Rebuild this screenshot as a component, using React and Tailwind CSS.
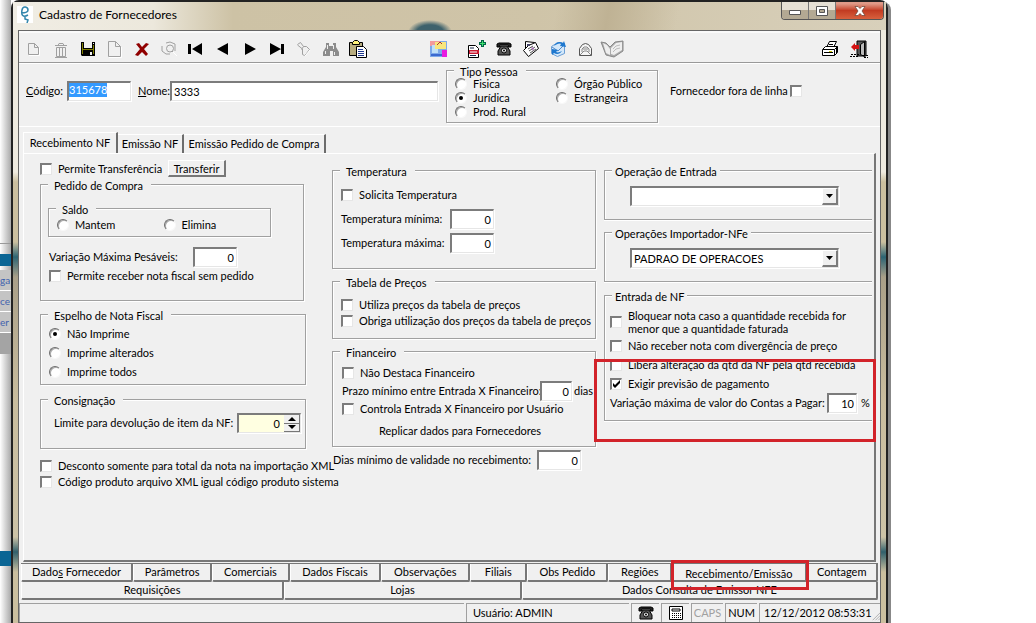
import React from "react";

const sunken =
  "border-t-2 border-l-2 border-r border-b border-t-[#7c7c7c] border-l-[#7c7c7c] border-r-[#e6e6e6] border-b-[#e6e6e6] shadow-[1px_1px_0_#fff] outline-none";

function Group({ title, className = "", inner = "", open = false, children }) {
  return (
    <fieldset
      className={`relative min-w-0 border border-[#a0a0a0] ${
        open ? "border-r-0 shadow-[0_1px_0_#fff,inset_1px_1px_0_#fff]" : "shadow-[1px_1px_0_#fff,inset_1px_1px_0_#fff]"
      } ${className}`}
    >
      <legend className={`h-[13px] bg-[#f0f0f0] leading-[16px] whitespace-nowrap ${open ? "ml-[7px] px-[3px]" : "ml-[7px] pr-2 pl-1.5"}`}>
        {title}
      </legend>
      <div className={inner}>{children}</div>
    </fieldset>
  );
}

function Check({ label, checked = false, className = "h-4", before = false, gap = "gap-1.5" }) {
  return (
    <label className={`flex items-center whitespace-nowrap ${gap} ${before ? "flex-row-reverse justify-end" : ""} ${className}`}>
      <span className="grid size-3 shrink-0">
        <input
          type="checkbox"
          defaultChecked={checked}
          className="peer col-start-1 row-start-1 size-3 appearance-none border-t-2 border-l-2 border-r border-b border-t-[#7c7c7c] border-l-[#7c7c7c] border-r-[#e6e6e6] border-b-[#e6e6e6] bg-white"
        />
        <svg viewBox="0 0 12 12" className="pointer-events-none invisible col-start-1 row-start-1 size-3 peer-checked:visible">
          <path d="M3 5v3l2 2 5-5V2L5 7z" fill="#000" />
        </svg>
      </span>
      <span>{label}</span>
    </label>
  );
}

function Radio({ label, name, checked = false, className = "h-4", gap = "gap-1.5" }) {
  return (
    <label className={`flex items-center whitespace-nowrap ${gap} ${className}`}>
      <span className="grid size-3 shrink-0 place-items-center">
        <input
          type="radio"
          name={name}
          defaultChecked={checked}
          className="peer col-start-1 row-start-1 size-3 appearance-none rounded-full border border-t-[#6c6c6c] border-l-[#6c6c6c] border-r-[#f8f8f8] border-b-[#f8f8f8] bg-white shadow-[inset_1px_1px_0_#aaa]"
        />
        <span className="pointer-events-none invisible col-start-1 row-start-1 size-1 rounded-full bg-black peer-checked:visible" />
      </span>
      <span>{label}</span>
    </label>
  );
}

function NumberField({ id, value, className = "w-11" }) {
  return <input id={id} defaultValue={value} className={`h-5 bg-white pr-0.5 text-right ${sunken} ${className}`} />;
}

function Combo({ label, value }) {
  return (
    <div className={`mr-[33px] ml-[25px] grid h-5 bg-white ${sunken}`}>
      <select aria-label={label} defaultValue={value} className="col-start-1 row-start-1 h-full w-full appearance-none bg-transparent pl-0.5 outline-none">
        <option value={value}>{value}</option>
      </select>
      <span className="pointer-events-none col-start-1 row-start-1 flex h-full w-4 items-center justify-center justify-self-end border-t border-l border-r-2 border-b-2 border-t-white border-l-white border-r-[#7c7c7c] border-b-[#7c7c7c] bg-[#f0f0f0]">
        <svg viewBox="0 0 7 4" className="h-1 w-[7px]"><path d="M0 0h7L3.500 4z" /></svg>
      </span>
    </div>
  );
}

function Phone() {
  return (
    <svg viewBox="0 0 16 14" className="h-3.5 w-4">
      <path d="M1 4V2l2-1h10l2 1v3h-3V3H4v2H1z" fill="#222" stroke="#000" />
      <path d="M5 4h6l3 5v4H2V9z" fill="#555" stroke="#000" />
      <circle cx="8" cy="8.500" r="2.500" fill="#eee" stroke="#000" />
      <circle cx="8" cy="8.500" r="1" />
    </svg>
  );
}

const S = ({ children }) => (
  <svg viewBox="0 0 18 18" className="size-[18px] shrink-0" fill="none">
    {children}
  </svg>
);

const leftTools = [
  ["Novo", <S><path d="M3.500 3.500h6l4 4v7h-10zM9.500 3.500v4h4" stroke="#a0a0a0" /><path d="M4 15.500h10.500v-8" stroke="#fff" /></S>],
  ["Excluir", <S><path d="M3 5.500h12M6 5.500l1-2h4l1 2M4.500 7.500h9v9h-9zM7.500 8v8M10.500 8v8M3 17.500h12" stroke="#a0a0a0" /></S>],
  ["Salvar", <S><path d="M2 2h14v14H3l-1-1z" fill="#000" /><path d="M3 3h1v11H3zM14 5h1v9h-1zM4 9h10v1H4z" fill="#808000" /><path d="M5 2h8v6H5z" fill="#f0f0f0" /><path d="M11 12h2v3h-2zM14 3h1v1h-1z" fill="#f0f0f0" /></S>],
  ["Documento", <S><path d="M2.500 1.500h7l5 5v10h-12zM9.500 1.500v5h5" stroke="#a0a0a0" /><path d="M3 17.500h12.500V7" stroke="#fff" /></S>],
  ["Cancelar", <S><path d="M3 4l3-1 3 4 4-4 3 1-5 5 4 5-2 2-4-4-4 4-3-1 5-6z" fill="#900000" /></S>],
  ["Localizar", <S><circle cx="10" cy="8.500" r="3.500" stroke="#a0a0a0" /><path d="M12 11l4 4M2 6v5l4 3h4M6 3l4-1 5 2v7" stroke="#a0a0a0" /><path d="M13 12l4 4" stroke="#fff" /></S>],
  ["Primeiro", <S><path d="M1 4h3v10H1zM15 3v12L5 9z" fill="#000" /></S>],
  ["Anterior", <S><path d="M14 3v12L3 9z" fill="#000" /></S>],
  ["Próximo", <S><path d="M4 3v12l11-6z" fill="#000" /></S>],
  ["Último", <S><path d="M2 3v12l11-6zM13 4h3v10h-3z" fill="#000" /></S>],
  ["Filtrar", <S><path d="M2.500 4.500l3-2 3 4h3l3 3-3 4-2 2-2-1V9l-5-4M8.500 6.500l-2 3" stroke="#a0a0a0" /><path d="M10 16l5-6" stroke="#fff" /></S>],
  ["Pesquisar", <S><path d="M4 3h3v3h4V3h3v4l3 5v4h-6v-5H8v5H1v-4l3-5z" fill="#8c8c8c" /><path d="M3.500 11v3M12.500 12v3M5.500 5v4M11.500 5v4" stroke="#eee" /></S>],
  ["Colar", <S><path d="M.5 2.500h13v13H.5z" fill="#b8ad80" stroke="#000" /><path d="M3.500 4.500v-2l2-2h3l2 2v2z" fill="#fff27a" stroke="#000" /><path d="M7.500 6.500h7l3 3v8h-10z" fill="#fff" stroke="#000" /><path d="M9 9.500h5M9 11.500h6M9 13.500h6M9 15.500h6" stroke="#203a90" /></S>],
];

const midTools = [
  ["Etiqueta adicionar", <S><path d="M.5 5.500h7l3 3v9H.5z" fill="#fff" stroke="#000" /><path d="M2 8h4M2 15.500h6" stroke="#18284c" /><path d="M1 10h10v4H1z" fill="#c81830" /><path d="M2 12h7" stroke="#fff" /><path d="M14.500 0v7M11 3.500h7" stroke="#064" strokeWidth="3" /><path d="M14.500 1v5M12 3.500h5" stroke="#3fe070" /></S>],
  ["Telefones", <Phone />],
  ["Cartões", <S><path d="M3.500 1.500l9 1v8l-9-1z" fill="#fff" stroke="#000" /><path d="M6.500 5.500l7-3 3 6-10 8-5-6z" fill="#fff" stroke="#000" /><path d="M5 4h3v2H5z" fill="#446" /><path d="M6 9l5-3M7 11l6-4M8 13l6-4" stroke="#555" /><path d="M9 7l3 1-1 3z" fill="#a06ab0" /></S>],
  ["Sincronizar", <S><path d="M2.500 6.500l6-4 7 1v10l-7 3-6-3z" fill="#d4e8fa" stroke="#6b9ed4" /><path d="M3 7l6 4 6-6" stroke="#5089c8" /><path d="M5 6c2-4 6-5 9-3l1-2 2 6-6-1 1-2c-2-1-4 0-7 2zM13 11c-2 3-5 4-8 2l-2 2v-6l6 1-2 2c2 1 4 0 6-1z" fill="#1e78cf" /></S>],
  ["Correio", <S><path d="M3.500 8.500l3-4 3-1 3 1 3 4v7h-12z" fill="#f5f5f5" stroke="#555" /><path d="M4 15l4-4h3l4 4M6 12V9l2-2h3l2 2v3M7 9h5" stroke="#888" /></S>],
];

function ToolButton({ label, children }) {
  return (
    <button type="button" aria-label={label} className="flex h-6 w-[27px] items-center justify-center">
      {children}
    </button>
  );
}

const subTabs = "whitespace-nowrap border-t border-r-2 border-t-white border-r-[#6c6c6c]";

const bottomTabs = [
  [<>Dado<u>s</u> Fornecedor</>, "grow-[113]"],
  ["Parâmetros", "grow-[79]"],
  ["Comerciais", "grow-[77]"],
  ["Dados Fiscais", "grow-[92]"],
  ["Observações", "grow-[89]"],
  ["Filiais", "grow-[56]"],
  ["Obs Pedido", "grow-[81]"],
  ["Regiões", "grow-[63]"],
  ["Recebimento/Emissão", "grow-[136]"],
  ["Contagem", "grow-[71]"],
];

const raisedTab = "h-[18px] min-w-0 basis-0 rounded-b-[2px] border-r-2 border-b-2 border-l border-r-[#777] border-b-[#777] border-l-white text-center leading-4 whitespace-nowrap";

function BackStrip() {
  return (
    <aside className="flex w-[11px] shrink-0 flex-col bg-linear-to-r from-white to-[#aaa] text-[10px] leading-5 text-[#3f62ad]">
      <div className="h-[244px] border-b border-[#999]" />
      <div className="h-2.5" />
      <div className="h-3 bg-[#0a6594]" />
      <div className="mt-1 h-[21px] border-b border-white bg-[#c4c4c4]">ga</div>
      <div className="h-[21px] border-b border-white bg-[#c4c4c4]">ce</div>
      <div className="h-[21px] border-b border-white bg-[#c4c4c4]">er</div>
      <div className="h-[21px] bg-[#a4a4a4]" />
      <div className="h-[197px]" />
      <div className="h-[15px] bg-[#0a6594]" />
    </aside>
  );
}

function TitleBar() {
  return (
    <header className="flex h-7 items-start justify-between pr-0.5 pl-1 bg-[radial-gradient(ellipse_22px_12px_at_417px_30px,#3e626c_60%,transparent),linear-gradient(100deg,transparent_0_62%,#bfb294_68%,transparent_76%),linear-gradient(90deg,#f0ede4_0,#ece8dc_140px,#cdc2a5_220px,#cfc4a8_60%,#d8d0bb)]">
      <div className="flex items-center gap-1.5 pt-1">
        <svg viewBox="0 0 16 17" className="h-[17px] w-4 bg-white" fill="none">
          <path d="M4 7c3 0 7 0 7-3S6-1 5 4s1 8 6 5M8 11v2l3 1-1 3" stroke="#3286ac" strokeWidth="1.500" />
        </svg>
        <h1 className="text-[12px] leading-4 whitespace-nowrap">Cadastro de Fornecedores</h1>
      </div>
      <div className="flex h-[18px] overflow-hidden rounded-b-[4px] border border-t-0 border-[#555]">
        <button type="button" aria-label="Minimizar" className="flex w-[27px] items-center justify-center border-r border-[#777] bg-linear-to-b from-[#e6e0d4] from-50% to-[#b3a993] to-50%">
          <svg viewBox="0 0 12 5" className="mt-1 h-[5px] w-3"><path d="M.5.5h11v4H.5z" fill="#fff" stroke="#555" /></svg>
        </button>
        <button type="button" aria-label="Maximizar" className="flex w-[27px] items-center justify-center border-r border-[#777] bg-linear-to-b from-[#e6e0d4] from-50% to-[#b3a993] to-50%">
          <svg viewBox="0 0 12 10" className="h-2.5 w-3"><path d="M.5.5h11v9H.5z" fill="#fff" stroke="#555" /><path d="M3.500 3.500h5v3h-5z" fill="#b3a993" stroke="#555" /></svg>
        </button>
        <button type="button" aria-label="Fechar" className="flex w-[47px] items-center justify-center bg-linear-to-b from-[#df9a88] from-10% via-[#c23b22] via-50% to-[#d8603d]">
          <svg viewBox="0 0 12 10" className="h-2.5 w-3"><path d="M1 .5h3l2 2 2-2h3L8 5l3 4.500H8l-2-2-2 2H1L4 5z" fill="#fff" stroke="#643" strokeWidth=".7" /></svg>
        </button>
      </div>
    </header>
  );
}

function Toolbar() {
  return (
    <div className="flex h-8 items-center border-b border-[#999] border-t-2 border-t-[#fafafa] pt-0.5 pl-px">
      {leftTools.map(([label, icon]) => <ToolButton key={label} label={label}>{icon}</ToolButton>)}
      <div className="ml-[54px]">
        <ToolButton label="Imagem">
          <svg viewBox="0 0 17 16" className="h-4 w-[17px]">
            <path d="M0 0h17v16H0z" fill="#7da8e8" />
            <path d="M0 0h10v5H0z" fill="#f39a9c" />
            <path d="M2 4h6v8H2z" fill="#bfe0f8" />
            <path d="M5 1h11v7H5z" fill="#f8e67c" />
            <path d="M12 9h5v7h-5z" fill="#e81ce0" />
            <path d="M1 13h11v2H1z" fill="#3c6ad0" />
            <path d="M7 4l3-3 2 2" fill="none" stroke="#a33" />
          </svg>
        </ToolButton>
      </div>
      <div className="ml-[11px] flex">
        {midTools.map(([label, icon]) => <ToolButton key={label} label={label}>{icon}</ToolButton>)}
        <ToolButton label="Livro">
          <svg viewBox="0 0 24 18" className="h-[18px] w-6 shrink-0">
            <path d="M1 2l5 1 4 4 5-5 8-1v10l-9 6-8-2z" fill="#aaa" stroke="#888" />
            <path d="M3 3l4 2 3 4v6l-4-2zM11 8l5-5 6-1v8l-8 5-3-1z" fill="#eee" />
            <path d="M13 9l3-3 4-1M13 12l3-3 4-1" fill="none" stroke="#bbb" />
          </svg>
        </ToolButton>
      </div>
      <div className="mr-2 ml-auto flex gap-0.5">
        <ToolButton label="Imprimir">
          <S><path d="M5.500 7.500l3-6h7l-3 6z" fill="#fff" stroke="#000" /><path d="M1.500 9.500l3-3h12v6l-3 3h-12z" fill="#fff" stroke="#000" /><path d="M2 9.500h11.500v6M13.500 9.500l3-3M15.500 8v6M3 12.500h9M8 4.500h4" stroke="#000" /><path d="M8 11h3v1H8z" fill="#cc0" /></S>
        </ToolButton>
        <ToolButton label="Sair">
          <S><path d="M7 1h9v15H7z" fill="#555" stroke="#000" /><path d="M10.500 4.500l4-3v15l-4-2z" fill="#bbb" stroke="#000" /><path d="M0 16.500h9M1 14.500h9M13 15.500h5M14 17.500h4" stroke="#000" strokeDasharray="2 1" /><path d="M1 7l4-4v2h4v4H5v2z" fill="#d31414" /></S>
        </ToolButton>
      </div>
    </div>
  );
}

function SupplierHeader() {
  return (
    <div className="flex h-16 items-center border-t border-t-white border-b border-b-white pr-20 pb-2 pl-[7px]">
      <label htmlFor="codigo" className="w-[41px]"><u>C</u>ódigo:</label>
      <div className={`h-5 w-16 bg-white ${sunken}`}>
        <input id="codigo" defaultValue="315678" className="block h-3.5 w-[38px] bg-[#3399ff] text-white outline-none" />
      </div>
      <label htmlFor="nome" className="ml-[7px] w-8"><u>N</u>ome:</label>
      <input id="nome" defaultValue="3333" className={`h-5 min-w-0 flex-1 bg-white px-0.5 ${sunken}`} />
      <Group title="Tipo Pessoa" className="ml-2 w-[212px] self-start">
        <div className="mb-[3px] ml-2 grid grid-cols-[101px_1fr]">
          <div>
            <Radio name="tipo" label="Fisica" className="h-3.5" />
            <Radio name="tipo" label="Jurídica" checked className="h-3.5" />
            <Radio name="tipo" label="Prod. Rural" className="h-3.5" />
          </div>
          <div>
            <Radio name="tipo" label="Órgão Público" className="h-3.5" />
            <Radio name="tipo" label="Estrangeira" className="h-3.5" />
          </div>
        </div>
      </Group>
      <Check label="Fornecedor fora de linha" before className="ml-3 h-4 w-[130px]" gap="gap-0.5" />
    </div>
  );
}

function LeftColumn() {
  return (
    <div className="min-w-0 pt-1.5">
      <div className="flex h-[17px] items-center gap-1.5">
        <Check label="Permite Transferência" />
        <button type="button" className="h-[17px] w-[58px] border-t border-l border-r-2 border-b-2 border-t-white border-l-white border-r-[#777] border-b-[#777] leading-[15px]">Transferir</button>
      </div>
      <Group title="Pedido de Compra" className="mt-px mr-7" inner="pt-[11px] pb-[15px]">
        <Group title="Saldo" className="mr-8 ml-[7px]" inner="mb-px ml-2 grid grid-cols-2">
          <Radio name="saldo" label="Mantem" className="h-5" />
          <Radio name="saldo" label="Elimina" className="h-5" />
        </Group>
        <div className="mt-2.5 ml-2 flex h-5 items-center">
          <label htmlFor="pesaveis" className="w-36">Variação Máxima Pesáveis:</label>
          <NumberField id="pesaveis" value="0" />
        </div>
        <Check label="Permite receber nota fiscal sem pedido" className="ml-2 h-[18px]" />
      </Group>
      <Group title="Espelho de Nota Fiscal" className="mt-[7px] mr-[26px]" inner="py-[3px] pl-2">
        <Radio name="espelho" label="Não Imprime" checked className="h-[19px]" />
        <Radio name="espelho" label="Imprime alterados" className="h-[19px]" />
        <Radio name="espelho" label="Imprime todos" className="h-[19px]" />
      </Group>
      <Group title="Consignação" className="mt-2 mr-[26px]" inner="pt-[7px] pb-[15px] pl-[13px]">
        <div className="flex h-5 items-center">
          <label htmlFor="limite" className="w-[183px] whitespace-nowrap">Limite para devolução de item da NF:</label>
          <div className={`flex h-5 w-16 bg-[#ffffe1] ${sunken}`}>
            <input id="limite" defaultValue="0" className="min-w-0 flex-1 pr-1 text-right outline-none" />
            <div className="flex w-4 flex-col">
              <button type="button" aria-label="Aumentar" className="flex flex-1 items-center justify-center border-r border-b border-[#777] bg-[#f0f0f0]"><svg viewBox="0 0 8 4" className="h-1 w-2"><path d="M0 4h8L4 0z" /></svg></button>
              <button type="button" aria-label="Diminuir" className="flex flex-1 items-center justify-center border-r border-b border-[#777] bg-[#f0f0f0]"><svg viewBox="0 0 8 4" className="h-1 w-2"><path d="M0 0h8L4 4z" /></svg></button>
            </div>
          </div>
        </div>
      </Group>
      <div className="mt-[9px]">
        <Check label="Desconto somente para total da nota na importação XML" />
        <Check label="Código produto arquivo XML igual código produto sistema" />
      </div>
    </div>
  );
}

function MiddleColumn() {
  return (
    <div className="mr-2 min-w-0 pt-2.5">
      <Group title="Temperatura" inner="pt-[9px] pb-[15px] pl-2">
        <Check label="Solicita Temperatura" className="h-[18px]" />
        <div className="mt-[5px] flex h-5 items-center">
          <label htmlFor="tmin" className="w-[109px]">Temperatura mínima:</label>
          <NumberField id="tmin" value="0" />
        </div>
        <div className="mt-1 flex h-5 items-center">
          <label htmlFor="tmax" className="w-[109px]">Temperatura máxima:</label>
          <NumberField id="tmax" value="0" />
        </div>
      </Group>
      <Group title="Tabela de Preços" className="mt-1.5" inner="py-[9px] pl-2">
        <Check label="Utiliza preços da tabela de preços" />
        <Check label="Obriga utilização dos preços da tabela de preços" />
      </Group>
      <Group title="Financeiro" className="mt-1.5" inner="py-[7px] pl-[9px]">
        <Check label="Não Destaca Financeiro" />
        <div className="flex h-5 items-center whitespace-nowrap">
          <label htmlFor="prazo" className="w-[198px]">Prazo mínimo entre Entrada X Financeiro:</label>
          <NumberField id="prazo" value="0" className="w-8" />
          <span className="pl-0.5">dias</span>
        </div>
        <Check label="Controla Entrada X Financeiro por Usuário" />
        <button type="button" className="mt-1.5 ml-[37px] block h-4 leading-4">Replicar dados para Fornecedores</button>
      </Group>
      <div className="mt-[3px] flex h-5 items-center whitespace-nowrap">
        <label htmlFor="validade" className="w-[205px] pl-px">Dias mínimo de validade no recebimento:</label>
        <NumberField id="validade" value="0" />
      </div>
    </div>
  );
}

function RightColumn() {
  return (
    <div className="min-w-0 pt-2.5">
      <Group open title="Operação de Entrada" inner="pt-[9px] pb-[13px]">
        <Combo label="Operação de Entrada" value="" />
      </Group>
      <Group open title="Operações Importador-NFe" className="mt-1.5" inner="pt-[9px] pb-[13px]">
        <Combo label="Operações Importador-NFe" value="PADRAO DE OPERACOES" />
      </Group>
      <Group open title="Entrada de NF" className="mt-[7px]" inner="py-[7px] pl-[5px]">
        <Check
          label={<>Bloquear nota caso a quantidade recebida for<br />menor que a quantidade faturada</>}
          className="h-[26px] leading-[13px]"
        />
        <Check label="Não receber nota com divergência de preço" className="mt-0.5 h-[18px]" />
        <Check label="Libera alteração da qtd da NF pela qtd recebida" className="h-[19px]" />
        <Check label="Exigir previsão de pagamento" checked className="h-[19px]" />
        <div className="flex h-5 items-center whitespace-nowrap">
          <label htmlFor="variacao" className="w-[217px]">Variação máxima de valor do Contas a Pagar:</label>
          <NumberField id="variacao" value="10" className="w-[30px]" />
          <span className="pl-1">%</span>
        </div>
        <div className="pointer-events-none absolute top-[57px] -right-1 -left-[11px] h-[83px] border-3 border-[#d2232a]" />
      </Group>
    </div>
  );
}

export default function App() {
  return (
    <div className="flex min-h-[623px] bg-white pr-[148px] font-['Lato','Liberation_Sans',sans-serif] text-[11px] leading-[14px] text-black">
      <BackStrip />
      <div className="flex min-w-0 flex-1 flex-col rounded-t-lg border-t-2 border-r-2 border-l-2 border-[#222] bg-[linear-gradient(180deg,#efebe0_0_170px,#cbbf9f_180px_240px,#2c6473_255px,#a99f88_275px,#c9bd9e_400px,#cdc3a7_535px,#31606c_550px,#cbbf9f_570px)] shadow-[3px_2px_0_#888]">
        <TitleBar />
        <main className="mx-[5px] flex flex-1 flex-col border border-[#666] bg-[#f0f0f0]">
          <Toolbar />
          <SupplierHeader />
          <nav className="flex items-end pt-[5px] pl-1">
            <button type="button" className={`h-[21px] w-[95px] ${subTabs} border-l border-l-white`}>Recebimento NF</button>
            <button type="button" className={`h-[19px] w-[66px] ${subTabs}`}>Emissão NF</button>
            <button type="button" className={`h-[19px] w-[142px] ${subTabs}`}>Emissão Pedido de Compra</button>
          </nav>
          <section className="mx-1 grid flex-1 grid-cols-[minmax(0,292fr)_minmax(0,272fr)_minmax(0,268fr)] border-t border-r-2 border-b-2 border-l border-t-white border-r-[#777] border-b-[#777] border-l-white pr-0.5 pb-[70px] pl-4">
            <LeftColumn />
            <MiddleColumn />
            <RightColumn />
          </section>
          <nav className="mx-0.5 mt-px border-t border-[#777]">
            <div className="flex">
              {bottomTabs.map(([label, grow], i) => (
                <button key={i} type="button" className={`${raisedTab} ${grow} ${i === 8 ? "relative z-10 pt-0.5" : ""}`}>
                  {label}
                  {i === 8 && <span className="pointer-events-none absolute -top-1 -right-1 -bottom-2.5 -left-0.5 border-3 border-[#d2232a]" />}
                </button>
              ))}
            </div>
            <div className="flex">
              <button type="button" className={`${raisedTab} grow-[263]`}>Requisições</button>
              <button type="button" className={`${raisedTab} grow-[237]`}>Lojas</button>
              <button type="button" className={`${raisedTab} grow-[357]`}>Dados Consulta de Emissor NFE</button>
            </div>
          </nav>
          <footer className="mt-[3px] flex h-[19px] gap-0.5 leading-[18px] whitespace-nowrap *:border-t *:border-l *:border-[#a0a0a0]">
            <div className="flex-1" />
            <div className="w-[163px] pl-1.5">Usuário: ADMIN</div>
            <div className="flex w-7 items-center justify-center"><Phone /></div>
            <div className="flex w-7 items-center justify-center">
              <svg viewBox="0 0 16 14" className="h-3.5 w-4" fill="none"><path d="M1.500.5h13v13h-13zM4 3h8v2H4z" fill="#fff" stroke="#000" /><path d="M4 7.500h9M4 9.500h9M4 11.500h9" stroke="#000" strokeDasharray="1 1" /></svg>
            </div>
            <div className="w-8 text-center text-[#a0a0a0]">CAPS</div>
            <div className="w-8 text-center">NUM</div>
            <div className="flex w-[121px] justify-between pl-1">
              <span>12/12/2012 08:53:31</span>
              <svg viewBox="0 0 12 12" className="size-3 self-end"><path d="M1 12L12 1M5 12l7-7M9 12l3-3" stroke="#999" /></svg>
            </div>
          </footer>
        </main>
        <div className="h-0.5" />
      </div>
    </div>
  );
}
